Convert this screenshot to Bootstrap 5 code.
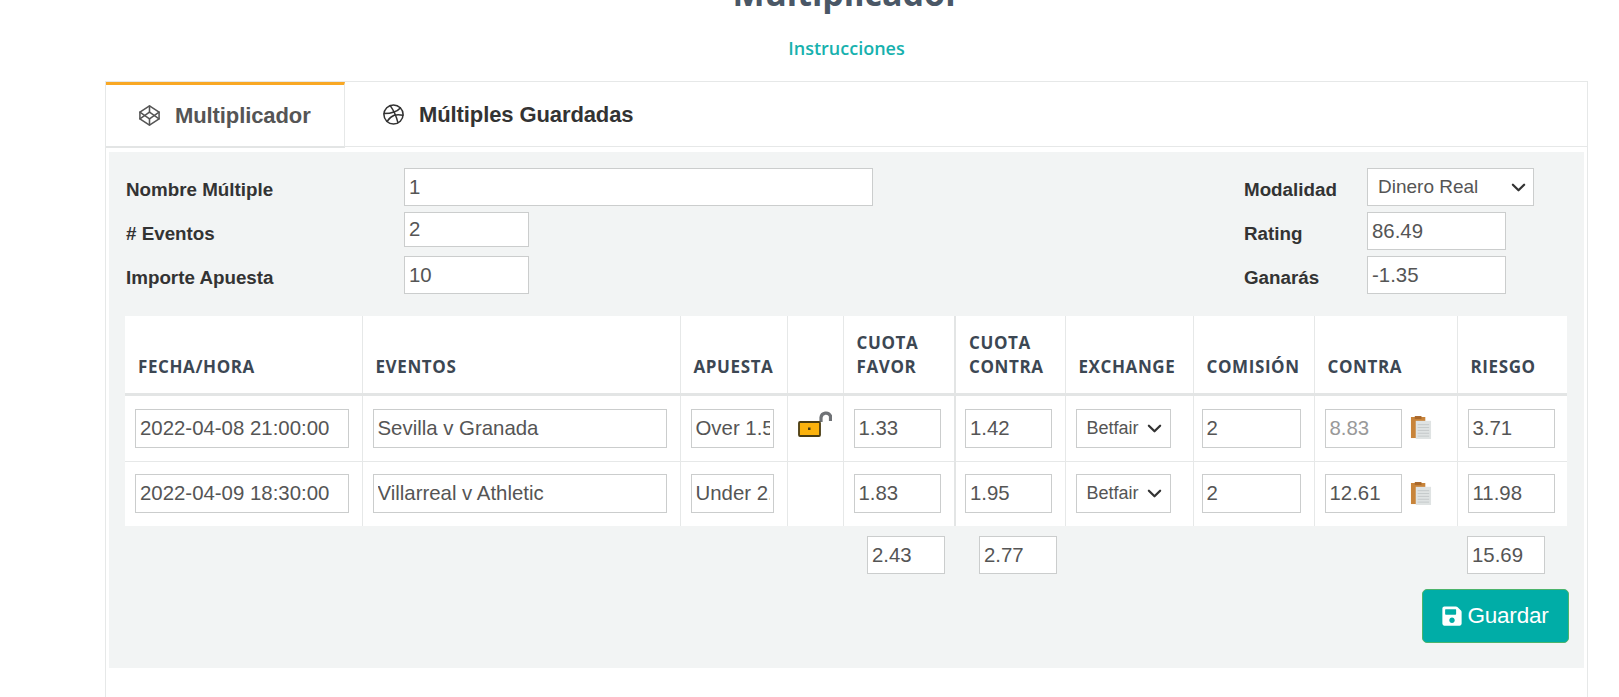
<!DOCTYPE html>
<html lang="es">
<head>
  <meta charset="UTF-8" />
  <meta name="viewport" content="width=device-width, initial-scale=1.0"/>
  <title>Multiplicador</title>
  <link href="https://cdn.jsdelivr.net/npm/bootstrap@5.3.0/dist/css/bootstrap.min.css" rel="stylesheet" />
  <style>
    html, body { height: 697px; overflow: hidden; background: #fff; }
    body { font-family: "Liberation Sans", Arial, sans-serif; color: #333; }
    .page-wrap { padding: 0 31px 0 105px; }
    .page-title { font: 700 34px/42px "Open Sans", sans-serif; color: #4a5766; margin: -28px 0 0; text-align: center; }
    .help-link { display: block; text-align: center; font: 600 18px/22px "Open Sans", sans-serif; color: #17b1ae; text-decoration: none; margin-top: 23px; height: 44px; }
    .outer-box { border: 1px solid #e6e8e8; border-width: 1px 1px 0 1px; height: 640px; }

    .tabs-bar { border-bottom: 1px solid #e6e8e8; height: 65px; flex-wrap: nowrap; }
    .tabs-bar .nav-link { display: flex; align-items: center; gap: 14px; height: 65px; margin: 0; padding: 0 0 0 32px; border: 0; border-radius: 0; font-size: 22px; font-weight: 700; color: #333; background: none; letter-spacing: -.1px; }
    .tabs-bar .nav-link svg { width: 23px; height: 23px; fill: none; stroke: currentColor; stroke-width: 1.6; stroke-linecap: round; stroke-linejoin: round; }
    .tabs-bar .nav-link.active { width: 239px; height: 66px; border-top: 3px solid #f9a825; border-right: 1px solid #e6e8e8; border-bottom: 2px solid #e3e5e5; color: #555; }
    .tabs-bar .second-tab { padding-left: 37px; }

    .bet-panel { background: #f2f4f4; margin: 5px 3px 0 3px; padding: 16px 17px 25px 16px; height: 516px; }
    .top-form { margin-left: 1px; margin-bottom: 22px; height: 126px; }
    .field-row { display: flex; align-items: flex-start; margin-bottom: 6px; }
    .field-row label { font-size: 18.8px; font-weight: 700; color: #333; margin: 0; padding-top: 10px; line-height: 24px; }
    .left-form label { width: 278px; }
    .right-form { width: 290px; margin-right: 33px; }
    .right-form label { width: 123px; }
    .field-row.tight { margin-bottom: 9px; }

    .bet-input.form-control { border: 1px solid #cbcdcd; border-radius: 0; padding: 0 3px 0 4px; font-size: 20.4px; color: #555; background: #fff; box-shadow: none; height: 38px; line-height: 1.2; min-height: 0; }
    .bet-select.form-select { border: 1px solid #cbcdcd; border-radius: 0; color: #555; box-shadow: none; height: 38px; min-height: 0; padding: 0 24px 0 10px; font-size: 19px;
      background-image: url("data:image/svg+xml,%3csvg xmlns='http://www.w3.org/2000/svg' viewBox='0 0 16 16'%3e%3cpath fill='none' stroke='%23333' stroke-linecap='round' stroke-linejoin='round' stroke-width='2.4' d='m2 5 6 6 6-6'/%3e%3c/svg%3e");
      background-size: 17px 15px; background-position: right 6px center; }
    .w-name { width: 469px; }
    .w-small { width: 125px; }
    .w-short { height: 35px !important; }
    .w-right { width: 139px; }
    .w-mode { width: 167px; }

    .bet-table { table-layout: fixed; width: 1442px; margin: 0; border-collapse: collapse; }
    .bet-table > * > tr > * { padding: 0; border: 0; background: transparent; box-shadow: none; }
    .bet-table > thead > tr > th { background: #fff; height: 78px; vertical-align: bottom; padding: 0 0 14px 13px; border-left: 1px solid #e6e8e8; border-bottom: 3px solid #e3e5e5; font: 700 17px/24px "Open Sans", sans-serif; letter-spacing: .6px; color: #3c4753; text-transform: uppercase; }
    .bet-table > tbody > tr > td { background: #fff; padding: 0 0 0 10px; border-left: 1px solid #e6e8e8; border-bottom: 1px solid #e6e8e8; height: 67px; vertical-align: middle; }
    .bet-table > tbody > tr:last-child > td { border-bottom: 0; height: 65px; }
    .bet-table > * > tr > *:first-child { border-left: 0; }
    .bet-table > * > tr > .thick-line { border-left: 2px solid #e3e5e5; }
    .bet-table > tbody > tr > td.thick-line { padding-left: 9px; }
    .bet-table > tbody > tr > td.comm-cell { padding-left: 8px; }
    .bet-table > tfoot > tr > td { padding: 10px 0 0 24px; }
    .bet-table > tfoot > tr > td.risk-total { padding-left: 10px; }
    .bet-table .bet-input, .bet-table .bet-select { height: 39px; }
    .bet-table > tfoot .bet-input { height: 38px; }
    .bet-table .bet-select { font-size: 18px; padding-left: 10px; background-position: right 7px center; }
    .readonly-input.form-control { color: #999; }

    .c-date { width: 237px; } .c-event { width: 318px; } .c-bet { width: 107px; } .c-lock { width: 56px; }
    .c-odd { width: 112px; } .c-odd2 { width: 110px; } .c-exch { width: 128px; } .c-comm { width: 121px; }
    .c-contra { width: 143px; } .c-risk { width: 110px; }
    .i-date { width: 214px; } .i-event { width: 294px; } .i-bet { width: 83px; } .i-odd { width: 87px; }
    .i-exch { width: 95px; } .i-comm { width: 99px; } .i-contra { width: 77px; } .i-risk { width: 87px; }
    .i-total { width: 78px; }
    .lock-icon { width: 34px; height: 28px; display: block; margin: -8px 0 0 0; }
    .clip-icon { width: 22px; height: 24px; flex: none; }

    .save-btn { background: #00ada7; border: 1px solid #4cb46c; border-radius: 5px; color: #fff; width: 147px; height: 54px; font-size: 22.5px; padding: 0; display: flex; align-items: center; justify-content: center; gap: 5px; margin: 15px -2px 0 auto; letter-spacing: -.2px; }
    .save-btn svg { width: 20px; height: 22px; fill: #fff; }
  </style>
</head>
<body>
  <div class="page-wrap">
    <h2 class="page-title">Multiplicador</h2>
    <a href="#" class="help-link">Instrucciones</a>

    <div class="outer-box">
      <!-- pestañas -->
      <ul class="nav nav-tabs tabs-bar">
        <li class="nav-item">
          <a class="nav-link active" href="#">
            <svg viewBox="0 0 24 24"><polygon points="12 2 22 8.5 22 15.5 12 22 2 15.5 2 8.5 12 2"/><line x1="12" y1="22" x2="12" y2="15.5"/><polyline points="22 8.5 12 15.5 2 8.5"/><polyline points="2 15.5 12 8.5 22 15.5"/><line x1="12" y1="2" x2="12" y2="8.5"/></svg>
            Multiplicador
          </a>
        </li>
        <li class="nav-item">
          <a class="nav-link second-tab" href="#">
            <svg viewBox="0 0 24 24"><circle cx="12" cy="12" r="10"/><path d="M8.56 2.75c4.37 6.03 6.02 9.42 8.03 17.72m2.54-15.38c-3.72 4.35-8.94 5.66-16.88 5.85m19.5 1.9c-3.5-.93-6.63-.82-8.94 0-2.58.92-5.01 2.86-7.44 6.32"/></svg>
            Múltiples Guardadas
          </a>
        </li>
      </ul>

      <div class="bet-panel">
        <div class="top-form d-flex justify-content-between">
          <div class="left-form">
            <div class="field-row"><label>Nombre Múltiple</label><input class="form-control bet-input w-name" value="1"></div>
            <div class="field-row tight"><label>&#35; Eventos</label><input class="form-control bet-input w-small w-short" value="2"></div>
            <div class="field-row"><label>Importe Apuesta</label><input class="form-control bet-input w-small" value="10"></div>
          </div>
          <div class="right-form">
            <div class="field-row"><label>Modalidad</label>
              <select class="form-select bet-select w-mode"><option>Dinero Real</option></select></div>
            <div class="field-row"><label>Rating</label><input class="form-control bet-input w-right" value="86.49"></div>
            <div class="field-row"><label>Ganarás</label><input class="form-control bet-input w-right" value="-1.35"></div>
          </div>
        </div>

        <table class="table bet-table">
          <colgroup>
            <col class="c-date"><col class="c-event"><col class="c-bet"><col class="c-lock"><col class="c-odd">
            <col class="c-odd2"><col class="c-exch"><col class="c-comm"><col class="c-contra"><col class="c-risk">
          </colgroup>
          <thead>
            <tr>
              <th>Fecha/Hora</th><th>Eventos</th><th>Apuesta</th><th></th>
              <th>Cuota<br>Favor</th><th class="thick-line">Cuota<br>Contra</th>
              <th>Exchange</th><th>Comisión</th><th>Contra</th><th>Riesgo</th>
            </tr>
          </thead>
          <tbody>
            <tr>
              <td><input class="form-control bet-input i-date" value="2022-04-08 21:00:00"></td>
              <td><input class="form-control bet-input i-event" value="Sevilla v Granada"></td>
              <td><input class="form-control bet-input i-bet" value="Over 1.5 goles"></td>
              <td>
                <svg class="lock-icon" viewBox="0 0 34 28">
                  <path d="M23 12V7.5a5 5 0 0 1 9.5-1.5V11" fill="none" stroke="#6f7276" stroke-width="3.2"/>
                  <rect x="1" y="12" width="21" height="14" rx="1" fill="#fbb20d" stroke="#4a3c12" stroke-width="1.8"/>
                  <rect x="10" y="17.5" width="2.5" height="2.5" fill="#4a3c12"/>
                </svg>
              </td>
              <td><input class="form-control bet-input i-odd" value="1.33"></td>
              <td class="thick-line"><input class="form-control bet-input i-odd" value="1.42"></td>
              <td><select class="form-select bet-select i-exch"><option>Betfair</option></select></td>
              <td class="comm-cell"><input class="form-control bet-input i-comm" value="2"></td>
              <td>
                <div class="d-flex align-items-center gap-2">
                  <input class="form-control bet-input readonly-input i-contra" value="8.83" readonly>
                  <svg class="clip-icon" viewBox="0 0 23 25"><use href="#clip"/></svg>
                </div>
              </td>
              <td><input class="form-control bet-input i-risk" value="3.71"></td>
            </tr>
            <tr>
              <td><input class="form-control bet-input i-date" value="2022-04-09 18:30:00"></td>
              <td><input class="form-control bet-input i-event" value="Villarreal v Athletic"></td>
              <td><input class="form-control bet-input i-bet" value="Under 2.5 goles"></td>
              <td></td>
              <td><input class="form-control bet-input i-odd" value="1.83"></td>
              <td class="thick-line"><input class="form-control bet-input i-odd" value="1.95"></td>
              <td><select class="form-select bet-select i-exch"><option>Betfair</option></select></td>
              <td class="comm-cell"><input class="form-control bet-input i-comm" value="2"></td>
              <td>
                <div class="d-flex align-items-center gap-2">
                  <input class="form-control bet-input i-contra" value="12.61">
                  <svg class="clip-icon" viewBox="0 0 23 25"><use href="#clip"/></svg>
                </div>
              </td>
              <td><input class="form-control bet-input i-risk" value="11.98"></td>
            </tr>
          </tbody>
          <tfoot>
            <tr>
              <td colspan="4"></td>
              <td><input class="form-control bet-input i-total" value="2.43"></td>
              <td><input class="form-control bet-input i-total" value="2.77"></td>
              <td colspan="3"></td>
              <td class="risk-total"><input class="form-control bet-input i-total" value="15.69"></td>
            </tr>
          </tfoot>
        </table>

        <button class="btn save-btn" type="button">
          <svg viewBox="0 0 448 512"><path d="M433.941 129.941l-83.882-83.882A48 48 0 0 0 316.118 32H48C21.49 32 0 53.49 0 80v352c0 26.51 21.49 48 48 48h352c26.51 0 48-21.49 48-48V163.882a48 48 0 0 0-14.059-33.941zM224 416c-35.346 0-64-28.654-64-64 0-35.346 28.654-64 64-64s64 28.654 64 64c0 35.346-28.654 64-64 64zm96-304.52V212c0 6.627-5.373 12-12 12H76c-6.627 0-12-5.373-12-12V108c0-6.627 5.373-12 12-12h228.52c3.183 0 6.235 1.264 8.485 3.515l3.48 3.48A11.996 11.996 0 0 1 320 111.48z"/></svg>
          Guardar
        </button>
      </div>
    </div>
  </div>

  <!-- icono del portapapeles, se reutiliza en las dos filas -->
  <svg width="0" height="0" class="d-none">
    <symbol id="clip" viewBox="0 0 23 25">
      <rect x="1" y="1" width="15" height="22" fill="#c8843a"/>
      <rect x="5" y="0" width="7" height="3" fill="#a8672a"/>
      <rect x="6" y="5" width="16" height="19" fill="#dfe3e3"/>
      <path d="M8 9h12M8 12h12M8 15h12M8 18h12M8 21h12" stroke="#c4c8c9" stroke-width="1"/>
    </symbol>
  </svg>

  <script src="https://cdn.jsdelivr.net/npm/bootstrap@5.3.0/dist/js/bootstrap.bundle.min.js"></script>
</body>
</html>
